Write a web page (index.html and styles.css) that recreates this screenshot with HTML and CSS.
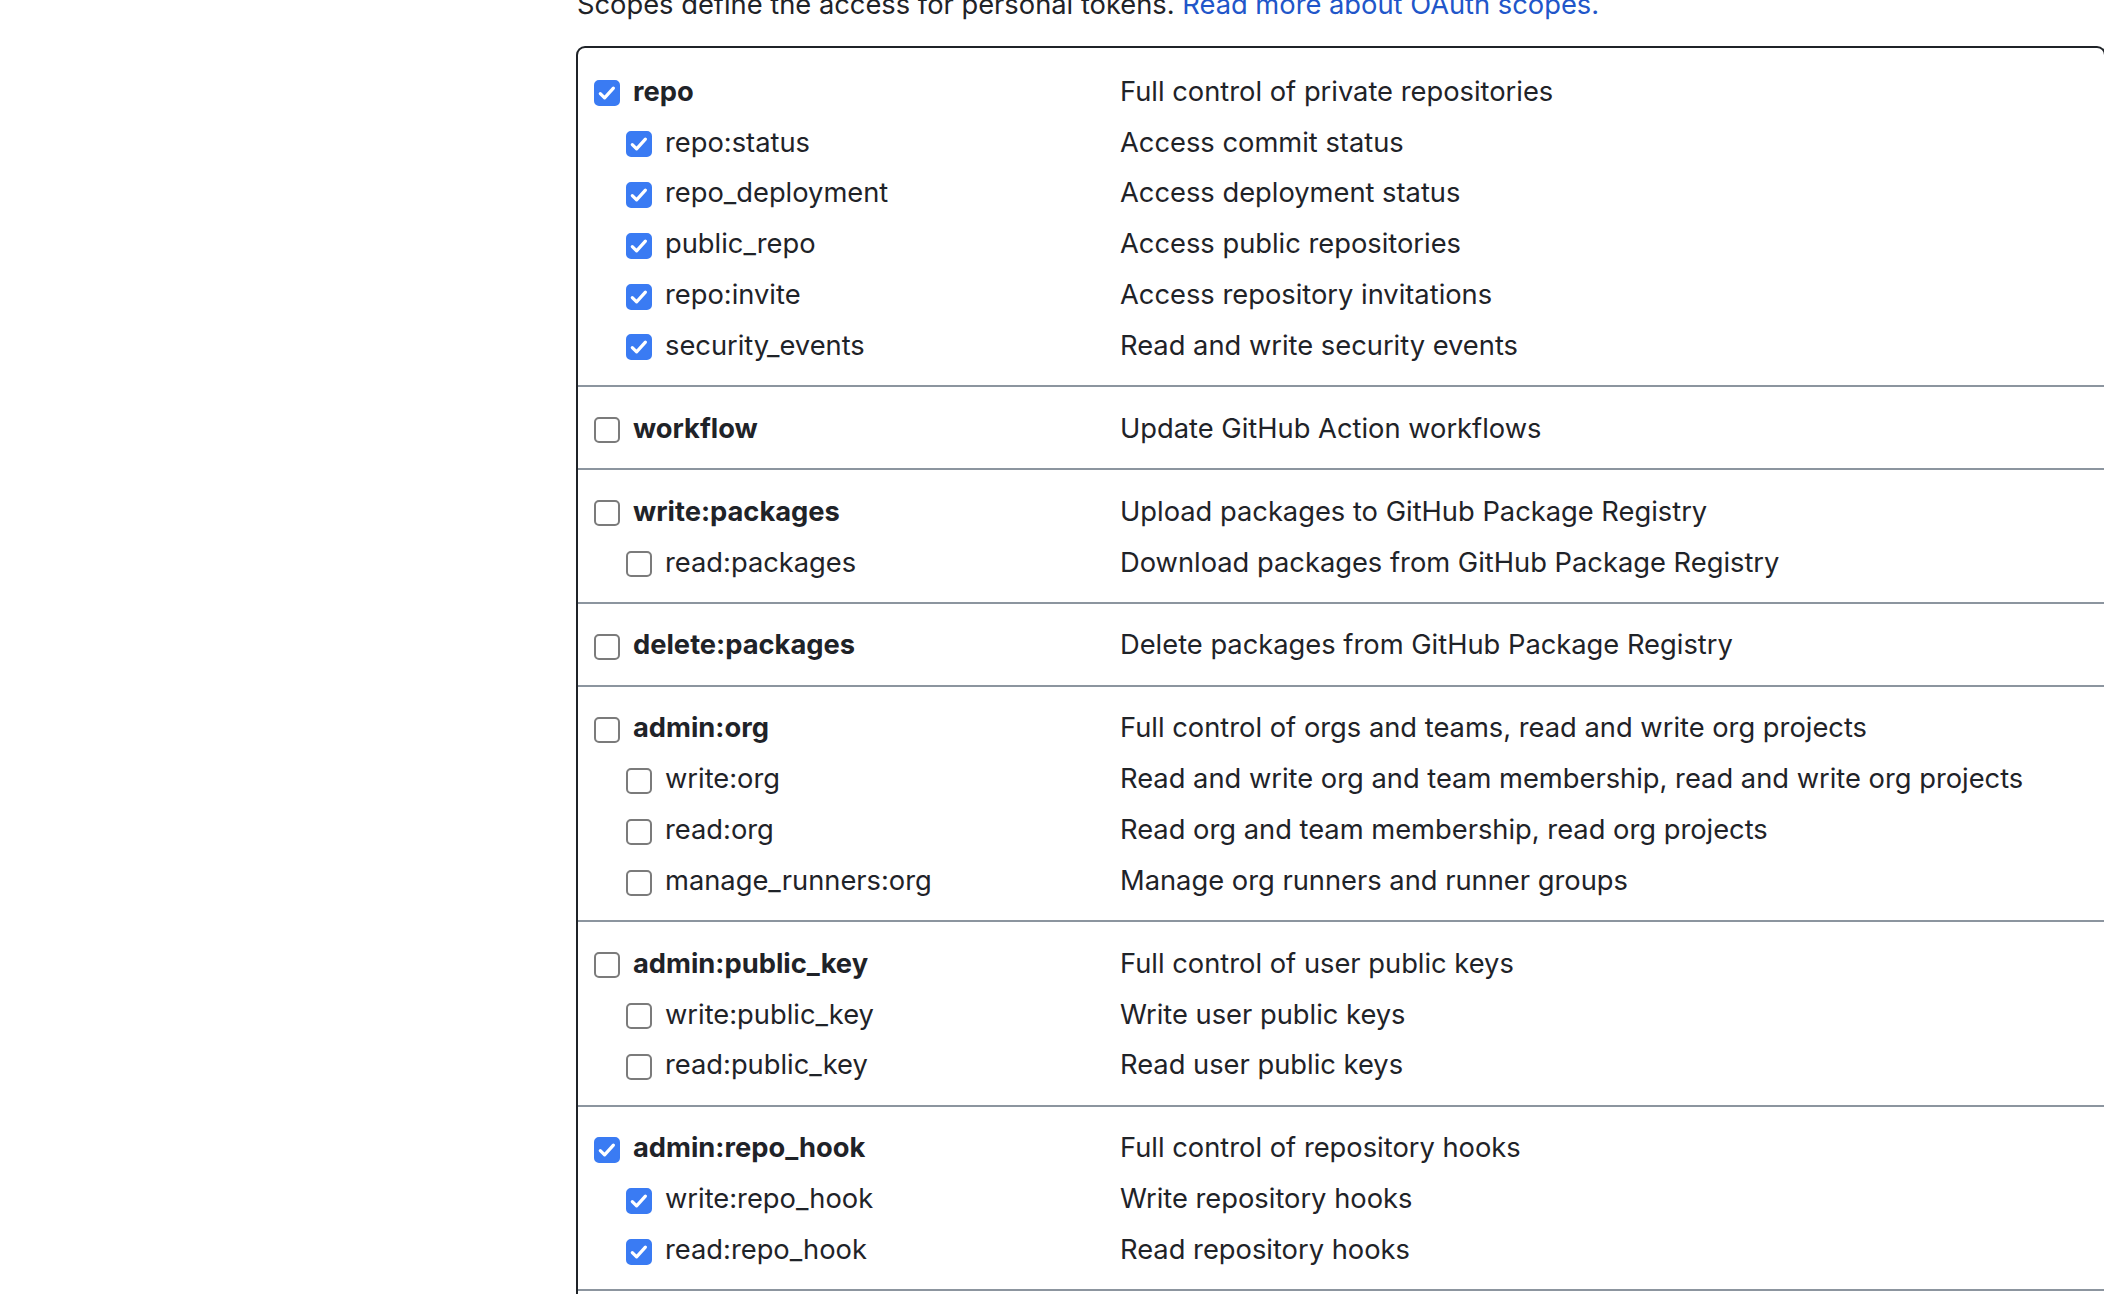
FILE: index.html
```html
<!DOCTYPE html>
<html lang="en">
<head>
<meta charset="utf-8">
<title>Scopes</title>
<link rel="stylesheet" href="styles.css">
</head>
<body>
<div class="page">
  <p class="intro">Scopes define the access for personal tokens. <a href="#" class="link">Read more about OAuth scopes.</a></p>
  <div class="scopes">
    <div class="group first">
      <div class="row"><div class="name"><span class="cb on"><svg viewBox="0 0 26 26"><path d="M6.3 13.6 L10.6 17.9 L19.4 8.2"/></svg></span><span class="label strong">repo</span></div><div class="desc">Full control of private repositories</div></div>
      <div class="row child"><div class="name"><span class="cb on"><svg viewBox="0 0 26 26"><path d="M6.3 13.6 L10.6 17.9 L19.4 8.2"/></svg></span><span class="label">repo:status</span></div><div class="desc">Access commit status</div></div>
      <div class="row child"><div class="name"><span class="cb on"><svg viewBox="0 0 26 26"><path d="M6.3 13.6 L10.6 17.9 L19.4 8.2"/></svg></span><span class="label">repo_deployment</span></div><div class="desc">Access deployment status</div></div>
      <div class="row child"><div class="name"><span class="cb on"><svg viewBox="0 0 26 26"><path d="M6.3 13.6 L10.6 17.9 L19.4 8.2"/></svg></span><span class="label">public_repo</span></div><div class="desc">Access public repositories</div></div>
      <div class="row child"><div class="name"><span class="cb on"><svg viewBox="0 0 26 26"><path d="M6.3 13.6 L10.6 17.9 L19.4 8.2"/></svg></span><span class="label">repo:invite</span></div><div class="desc">Access repository invitations</div></div>
      <div class="row child"><div class="name"><span class="cb on"><svg viewBox="0 0 26 26"><path d="M6.3 13.6 L10.6 17.9 L19.4 8.2"/></svg></span><span class="label">security_events</span></div><div class="desc">Read and write security events</div></div>
    </div>
    <div class="group">
      <div class="row"><div class="name"><span class="cb"></span><span class="label strong">workflow</span></div><div class="desc">Update GitHub Action workflows</div></div>
    </div>
    <div class="group">
      <div class="row"><div class="name"><span class="cb"></span><span class="label strong">write:packages</span></div><div class="desc">Upload packages to GitHub Package Registry</div></div>
      <div class="row child"><div class="name"><span class="cb"></span><span class="label">read:packages</span></div><div class="desc">Download packages from GitHub Package Registry</div></div>
    </div>
    <div class="group">
      <div class="row"><div class="name"><span class="cb"></span><span class="label strong">delete:packages</span></div><div class="desc">Delete packages from GitHub Package Registry</div></div>
    </div>
    <div class="group">
      <div class="row"><div class="name"><span class="cb"></span><span class="label strong">admin:org</span></div><div class="desc">Full control of orgs and teams, read and write org projects</div></div>
      <div class="row child"><div class="name"><span class="cb"></span><span class="label">write:org</span></div><div class="desc">Read and write org and team membership, read and write org projects</div></div>
      <div class="row child"><div class="name"><span class="cb"></span><span class="label">read:org</span></div><div class="desc">Read org and team membership, read org projects</div></div>
      <div class="row child"><div class="name"><span class="cb"></span><span class="label">manage_runners:org</span></div><div class="desc">Manage org runners and runner groups</div></div>
    </div>
    <div class="group">
      <div class="row"><div class="name"><span class="cb"></span><span class="label strong">admin:public_key</span></div><div class="desc">Full control of user public keys</div></div>
      <div class="row child"><div class="name"><span class="cb"></span><span class="label">write:public_key</span></div><div class="desc">Write user public keys</div></div>
      <div class="row child"><div class="name"><span class="cb"></span><span class="label">read:public_key</span></div><div class="desc">Read user public keys</div></div>
    </div>
    <div class="group last">
      <div class="row"><div class="name"><span class="cb on"><svg viewBox="0 0 26 26"><path d="M6.3 13.6 L10.6 17.9 L19.4 8.2"/></svg></span><span class="label strong">admin:repo_hook</span></div><div class="desc">Full control of repository hooks</div></div>
      <div class="row child"><div class="name"><span class="cb on"><svg viewBox="0 0 26 26"><path d="M6.3 13.6 L10.6 17.9 L19.4 8.2"/></svg></span><span class="label">write:repo_hook</span></div><div class="desc">Write repository hooks</div></div>
      <div class="row child"><div class="name"><span class="cb on"><svg viewBox="0 0 26 26"><path d="M6.3 13.6 L10.6 17.9 L19.4 8.2"/></svg></span><span class="label">read:repo_hook</span></div><div class="desc">Read repository hooks</div></div>
    </div>
  </div>
</div>
</body>
</html>
```
FILE: styles.css
```css
html, body {
  margin: 0;
  padding: 0;
  background: #ffffff;
  overflow: hidden;
}
body {
  width: 2104px;
  height: 1294px;
  font-family: Inter, "Liberation Sans", sans-serif;
  font-size: 27.3px;
  color: #1f2328;
}
.page {
  padding-left: 576px;
}
.intro {
  margin: -12.5px 0 25.5px 1px;
  line-height: 33px;
  white-space: nowrap;
}
.link {
  color: #2156c9;
  text-decoration: none;
}
.scopes {
  width: 1530px;
  box-sizing: border-box;
  border: 2px solid #1f2328;
  border-bottom: none;
  border-radius: 9px 9px 0 0;
  background: #fff;
  padding-bottom: 3px;
}
.group {
  padding: 18px 0 12.2px;
  border-top: 2px solid #8c959f;
}
.group.first {
  padding-top: 20px;
  border-top: none;
}
.group.last {
  border-bottom: 2px solid #8c959f;
}
.row {
  display: flex;
  align-items: center;
  height: 50.8px;
  padding-left: 16px;
  white-space: nowrap;
}
.name {
  display: flex;
  align-items: center;
  width: 526px;
  flex: none;
  box-sizing: border-box;
}
.row.child .name {
  padding-left: 32px;
}
.cb {
  width: 26px;
  height: 26px;
  box-sizing: border-box;
  border: 2px solid #7b7b7b;
  border-radius: 5px;
  background: #fff;
  flex: none;
  margin-right: 13px;
  display: flex;
}
.cb.on {
  background: #3a7bf3;
  border-color: #3a7bf3;
}
.cb svg {
  width: 26px;
  height: 26px;
  margin: -2px;
  fill: none;
  stroke: #ffffff;
  stroke-width: 3.2;
  stroke-linecap: round;
  stroke-linejoin: round;
}
.label {
  line-height: 1;
  padding-bottom: 4px;
}
.label.strong {
  font-weight: 700;
}
.desc {
  flex: none;
  line-height: 1;
  padding-bottom: 4px;
}
```
